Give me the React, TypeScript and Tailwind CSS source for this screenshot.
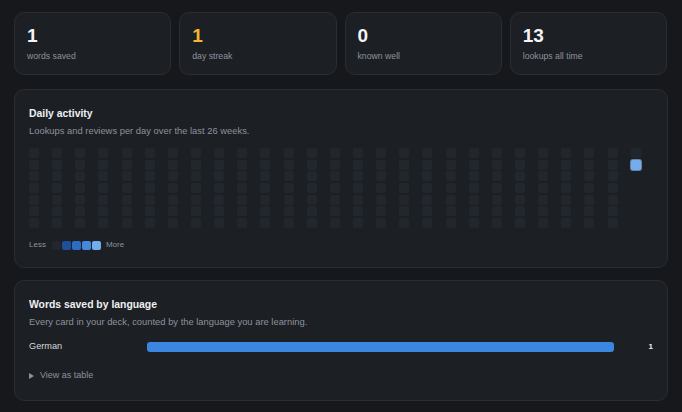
import React from 'react';

type Stat = { value: string; label: string; accent?: boolean };

const STATS: Stat[] = [
  { value: '1', label: 'words saved' },
  { value: '1', label: 'day streak', accent: true },
  { value: '0', label: 'known well' },
  { value: '13', label: 'lookups all time' },
];

const LEVEL_CLASSES = [
  'bg-[#22262d]',
  'bg-[#1f4f99]',
  'bg-[#2e6cc2]',
  'bg-[#4589dc]',
  'bg-[#74adee]',
];

const WEEKS = 26;

// one column per week, plus the current partial week
function buildWeeks(): (number | null)[][] {
  const cols: (number | null)[][] = [];
  for (let w = 0; w < WEEKS; w++) {
    cols.push([0, 0, 0, 0, 0, 0, 0]);
  }
  cols.push([0, 4, null, null, null, null, null]);
  return cols;
}

function StatCard({ stat }: { stat: Stat }) {
  return (
    <div className="flex-1 rounded-[10px] border border-[#292d34] bg-[#1c1f24] px-3 pt-[12px] pb-[11px]">
      <div
        className={`text-[19px] leading-[22px] font-bold ${stat.accent ? 'text-[#f5b731]' : 'text-[#f2f4f7]'}`}
      >
        {stat.value}
      </div>
      <div className="mt-[2px] text-[8.7px] leading-[14px] text-[#8c939d]">{stat.label}</div>
    </div>
  );
}

function ActivityGrid() {
  const weeks = buildWeeks();
  return (
    <div className="mt-[10px] flex w-[612px] justify-between">
      {weeks.map((col, ci) => (
        <div key={ci} className="flex flex-col gap-[1.7px]">
          {col.map((lvl, ri) =>
            lvl === null ? (
              <div key={ri} className="h-[10px] w-[10px]" />
            ) : (
              <div
                key={ri}
                className={`h-[10px] w-[10px] rounded-[2px] ${LEVEL_CLASSES[lvl]} ${
                  lvl === 4 ? 'ring-1 ring-[#9cc6f5]/60' : ''
                }`}
              />
            ),
          )}
        </div>
      ))}
    </div>
  );
}

function Legend() {
  return (
    <div className="mt-[9px] flex h-4 items-center text-[8px] text-[#8c939d]">
      <span>Less</span>
      <div className="ml-[6px] mr-[5px] flex gap-px">
        {LEVEL_CLASSES.map((c, i) => (
          <div key={i} className={`h-[9px] w-[9px] rounded-[2px] ${c}`} />
        ))}
      </div>
      <span>More</span>
    </div>
  );
}

function CardHeader({ title, subtitle }: { title: string; subtitle: string }) {
  return (
    <>
      <h2 className="text-[10.4px] leading-[16px] font-bold text-[#eef0f3]">{title}</h2>
      <p className="mt-px text-[9.4px] leading-[15px] text-[#8c939d]">{subtitle}</p>
    </>
  );
}

export default function App() {
  return (
    <div
      className="min-h-[412px] w-[682px] bg-[#16181c] px-[14px] pt-3"
      style={{ fontFamily: '"Liberation Sans", Arial, sans-serif' }}
    >
      <div className="flex gap-2 pr-px">
        {STATS.map((s) => (
          <StatCard key={s.label} stat={s} />
        ))}
      </div>

      <section className="mt-[14px] rounded-[10px] border border-[#292d34] bg-[#1c1f24] px-[14px] pt-[16px] pb-[14px]">
        <CardHeader title="Daily activity" subtitle="Lookups and reviews per day over the last 26 weeks." />
        <ActivityGrid />
        <Legend />
      </section>

      <section className="mt-[12px] rounded-[10px] border border-[#292d34] bg-[#1c1f24] px-[14px] pt-[16px] pb-[16px]">
        <CardHeader
          title="Words saved by language"
          subtitle="Every card in your deck, counted by the language you are learning."
        />
        <div className="mt-[9px] flex h-[18px] items-center">
          <span className="w-[118px] text-[9.2px] text-[#d5d9de]">German</span>
          <div className="h-[10px] flex-1 rounded-[3px] bg-[#3a86e0]" />
          <span className="w-[39px] text-right text-[8px] font-bold text-[#eef0f3]">1</span>
        </div>
        <div className="mt-[12px] flex h-4 items-center gap-[6px] text-[9px] text-[#8c939d]">
          <svg width="5" height="6" viewBox="0 0 5 6" className="shrink-0">
            <path d="M0 0 L5 3 L0 6 Z" fill="#8c939d" />
          </svg>
          <span>View as table</span>
        </div>
      </section>
    </div>
  );
}
